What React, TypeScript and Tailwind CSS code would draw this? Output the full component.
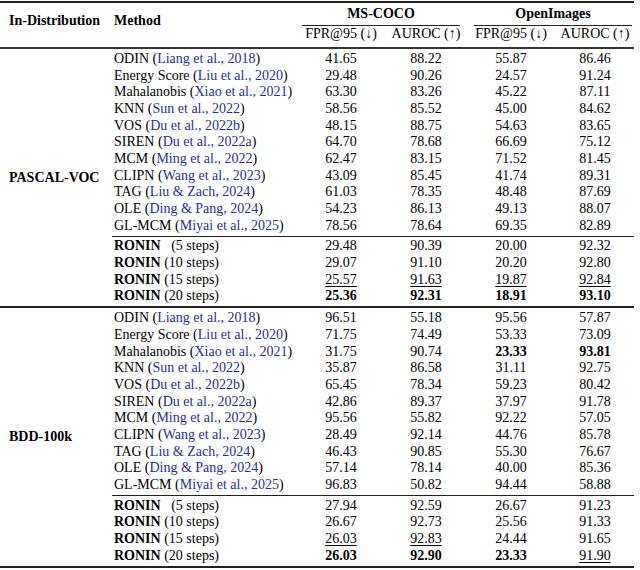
import React from "react";

type Row = { name: string; cite: string; vals: string[] };

const pascalRows: Row[] = [
  { name: "ODIN", cite: "Liang et al., 2018", vals: ["41.65", "88.22", "55.87", "86.46"] },
  { name: "Energy Score", cite: "Liu et al., 2020", vals: ["29.48", "90.26", "24.57", "91.24"] },
  { name: "Mahalanobis", cite: "Xiao et al., 2021", vals: ["63.30", "83.26", "45.22", "87.11"] },
  { name: "KNN", cite: "Sun et al., 2022", vals: ["58.56", "85.52", "45.00", "84.62"] },
  { name: "VOS", cite: "Du et al., 2022b", vals: ["48.15", "88.75", "54.63", "83.65"] },
  { name: "SIREN", cite: "Du et al., 2022a", vals: ["64.70", "78.68", "66.69", "75.12"] },
  { name: "MCM", cite: "Ming et al., 2022", vals: ["62.47", "83.15", "71.52", "81.45"] },
  { name: "CLIPN", cite: "Wang et al., 2023", vals: ["43.09", "85.45", "41.74", "89.31"] },
  { name: "TAG", cite: "Liu & Zach, 2024", vals: ["61.03", "78.35", "48.48", "87.69"] },
  { name: "OLE", cite: "Ding & Pang, 2024", vals: ["54.23", "86.13", "49.13", "88.07"] },
  { name: "GL-MCM", cite: "Miyai et al., 2025", vals: ["78.56", "78.64", "69.35", "82.89"] },
];

const pascalRonin: string[][] = [
  ["29.48", "90.39", "20.00", "92.32"],
  ["29.07", "91.10", "20.20", "92.80"],
  ["u:25.57", "u:91.63", "u:19.87", "u:92.84"],
  ["b:25.36", "b:92.31", "b:18.91", "b:93.10"],
];

const bddRows: Row[] = [
  { name: "ODIN", cite: "Liang et al., 2018", vals: ["96.51", "55.18", "95.56", "57.87"] },
  { name: "Energy Score", cite: "Liu et al., 2020", vals: ["71.75", "74.49", "53.33", "73.09"] },
  { name: "Mahalanobis", cite: "Xiao et al., 2021", vals: ["31.75", "90.74", "b:23.33", "b:93.81"] },
  { name: "KNN", cite: "Sun et al., 2022", vals: ["35.87", "86.58", "31.11", "92.75"] },
  { name: "VOS", cite: "Du et al., 2022b", vals: ["65.45", "78.34", "59.23", "80.42"] },
  { name: "SIREN", cite: "Du et al., 2022a", vals: ["42.86", "89.37", "37.97", "91.78"] },
  { name: "MCM", cite: "Ming et al., 2022", vals: ["95.56", "55.82", "92.22", "57.05"] },
  { name: "CLIPN", cite: "Wang et al., 2023", vals: ["28.49", "92.14", "44.76", "85.78"] },
  { name: "TAG", cite: "Liu & Zach, 2024", vals: ["46.43", "90.85", "55.30", "76.67"] },
  { name: "OLE", cite: "Ding & Pang, 2024", vals: ["57.14", "78.14", "40.00", "85.36"] },
  { name: "GL-MCM", cite: "Miyai et al., 2025", vals: ["96.83", "50.82", "94.44", "58.88"] },
];

const bddRonin: string[][] = [
  ["27.94", "92.59", "26.67", "91.23"],
  ["26.67", "92.73", "25.56", "91.33"],
  ["u:26.03", "u:92.83", "24.44", "91.65"],
  ["b:26.03", "b:92.90", "b:23.33", "u:91.90"],
];

const steps = ["5", "10", "15", "20"];
const colW = ["w-[78px]", "w-[92px]", "w-[78px]", "w-[90px]"];

function Cell({ v, i }: { v: string; i: number }) {
  let cls = "";
  let text = v;
  if (v.startsWith("b:")) {
    cls = "font-bold";
    text = v.slice(2);
  } else if (v.startsWith("u:")) {
    cls = "underline underline-offset-[2px] decoration-1";
    text = v.slice(2);
  }
  return (
    <div className={`${colW[i]} text-center`}>
      <span className={cls}>{text}</span>
    </div>
  );
}

function Values({ vals }: { vals: string[] }) {
  return (
    <>
      {vals.map((v, i) => (
        <Cell key={i} v={v} i={i} />
      ))}
    </>
  );
}

function Section({ label, rows, ronin }: { label: string; rows: Row[]; ronin: string[][] }) {
  return (
    <div className="flex">
      <div className="w-[105px] flex items-center pl-[9px] font-bold">{label}</div>
      <div className="flex flex-col">
        <div className="h-[1.5px]" />
        {rows.map((r) => (
          <div key={r.name} className="flex items-center h-[16.7px]">
            <div className="w-[197px] pl-[9px] whitespace-nowrap">
              {r.name} (<span className="text-[#1f3290]">{r.cite}</span>)
            </div>
            <Values vals={r.vals} />
          </div>
        ))}
        <div className="h-[1.5px]" />
        <div className="h-px ml-[7px] w-[522px] bg-[#222]" />
        <div className="h-[1.5px]" />
        {ronin.map((vals, i) => (
          <div key={i} className="flex items-center h-[16.7px]">
            <div className="w-[197px] pl-[9px] whitespace-nowrap">
              <span className="font-bold">RONIN</span>
              {steps[i].length === 1 && <span className="invisible">0</span>} ({steps[i]} steps)
            </div>
            <Values vals={vals} />
          </div>
        ))}
        <div className="h-[1.5px]" />
      </div>
    </div>
  );
}

export default function App() {
  return (
    <div
      className="w-[640px] h-[570px] bg-white text-black text-[14px] leading-[16px] overflow-hidden"
      style={{ fontFamily: '"Liberation Serif", "Times New Roman", serif' }}
    >
      <div className="mt-[1px] h-[2px] w-[634px] bg-[#222]" />

      {/* header */}
      <div className="flex">
        <div className="w-[105px] pl-[9px] pt-[10px] font-bold">In-Distribution</div>
        <div className="w-[197px] pl-[9px] pt-[10px] font-bold">Method</div>
        <div className="flex flex-col">
          <div className="flex items-center h-[22px] font-bold">
            <div className="w-[158px] text-center">MS-COCO</div>
            <div className="w-[14px]" />
            <div className="w-[158px] text-center">OpenImages</div>
          </div>
          <div className="flex">
            <div className="w-[158px] h-px bg-[#222]" />
            <div className="w-[14px]" />
            <div className="w-[158px] h-px bg-[#222]" />
          </div>
          <div className="flex h-[21px] pt-[1px] leading-[14px]">
            <div className="w-[78px] text-center whitespace-nowrap">FPR@95 (↓)</div>
            <div className="w-[92px] text-center whitespace-nowrap">AUROC (↑)</div>
            <div className="w-[78px] text-center whitespace-nowrap">FPR@95 (↓)</div>
            <div className="w-[90px] text-center whitespace-nowrap">AUROC (↑)</div>
          </div>
        </div>
      </div>
      <div className="h-[2px] w-[634px] bg-[#333]" />

      <Section label="PASCAL-VOC" rows={pascalRows} ronin={pascalRonin} />
      <div className="h-[2px] w-[634px] bg-[#222]" />
      <Section label="BDD-100k" rows={bddRows} ronin={bddRonin} />
      <div className="h-[2px] w-[634px] bg-[#222]" />
    </div>
  );
}
